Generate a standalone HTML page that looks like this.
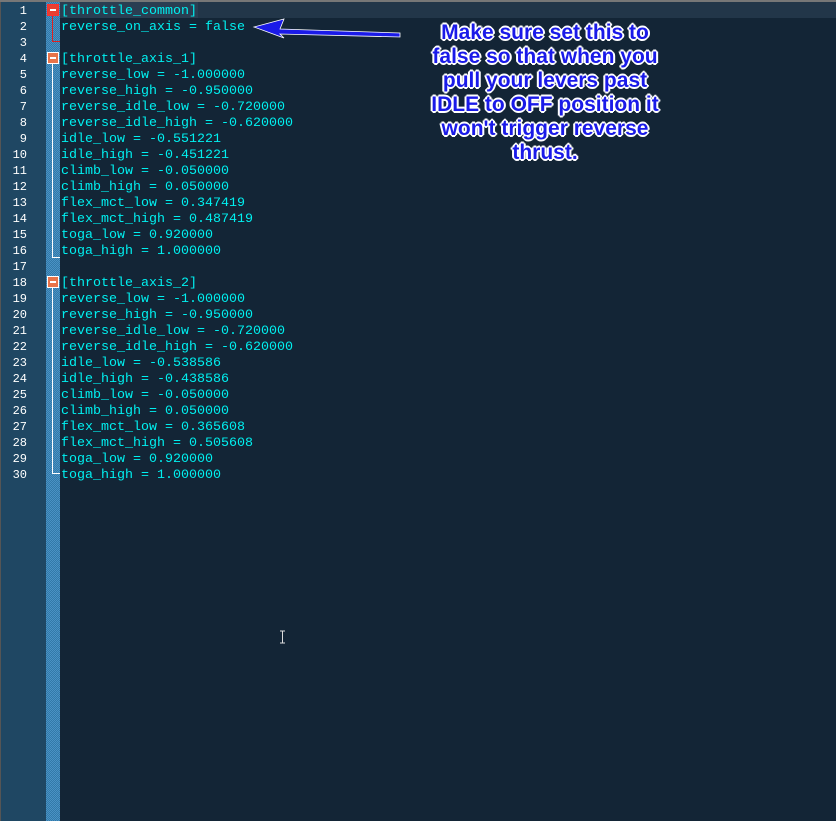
<!DOCTYPE html>
<html><head><style>
html,body{margin:0;padding:0}
body{width:836px;height:821px;background:#132536;position:relative;overflow:hidden}
#lb{position:absolute;left:0;top:0;width:1px;height:821px;background:#555}
#tb{position:absolute;left:0;top:0;width:836px;height:2px;background:#777}
#gut{position:absolute;left:1px;top:0;width:45px;height:821px;background:#1f4763}
#fold{position:absolute;left:46px;top:0;width:14px;height:821px;background-color:#3d86b8;background-image:repeating-conic-gradient(#3279a8 0 25%,#4a92c4 0 50%);background-size:2px 2px}
#cur{position:absolute;left:60px;top:2px;width:776px;height:16px;background:#223649}
.ln{position:absolute;left:1px;width:26px;text-align:right;color:#fff;font:12px "Liberation Mono",monospace;line-height:16px;margin-top:1px}
.code{position:absolute;left:61px;top:4px;color:#00f0f0;font:13.33px "Liberation Mono",monospace;line-height:16px;white-space:pre;margin:0}
.box{position:absolute;left:47px;width:10px;height:10px;border:1px solid #fff;background:#e8744a}
.box:after{content:"";position:absolute;left:2px;top:4px;width:6px;height:2px;background:#fff}
.vl{position:absolute;left:52px;width:1px;background:#fff}
.note{position:absolute;left:385px;top:21px;width:320px;text-align:center;font:bold 21px "Liberation Sans",sans-serif;line-height:24px;color:#1a1ae8;white-space:nowrap;text-shadow:1px 1px 0 #fff,-1px -1px 0 #fff,1px -1px 0 #fff,-1px 1px 0 #fff,2px 0 0 #fff,-2px 0 0 #fff,0 2px 0 #fff,0 -2px 0 #fff}
</style></head><body>
<div id="gut"></div><div id="fold"></div><div id="cur"></div>
<div style="position:absolute;left:60px;top:2px;width:138px;height:16px;background:#2a3e52"></div>
<div id="lb"></div><div id="tb"></div>
<div class="ln" style="top:2px">1</div><div class="ln" style="top:18px">2</div><div class="ln" style="top:34px">3</div><div class="ln" style="top:50px">4</div><div class="ln" style="top:66px">5</div><div class="ln" style="top:82px">6</div><div class="ln" style="top:98px">7</div><div class="ln" style="top:114px">8</div><div class="ln" style="top:130px">9</div><div class="ln" style="top:146px">10</div><div class="ln" style="top:162px">11</div><div class="ln" style="top:178px">12</div><div class="ln" style="top:194px">13</div><div class="ln" style="top:210px">14</div><div class="ln" style="top:226px">15</div><div class="ln" style="top:242px">16</div><div class="ln" style="top:258px">17</div><div class="ln" style="top:274px">18</div><div class="ln" style="top:290px">19</div><div class="ln" style="top:306px">20</div><div class="ln" style="top:322px">21</div><div class="ln" style="top:338px">22</div><div class="ln" style="top:354px">23</div><div class="ln" style="top:370px">24</div><div class="ln" style="top:386px">25</div><div class="ln" style="top:402px">26</div><div class="ln" style="top:418px">27</div><div class="ln" style="top:434px">28</div><div class="ln" style="top:450px">29</div><div class="ln" style="top:466px">30</div>
<div class="vl" style="top:15px;height:27px;background:#e02020"></div>
<div style="position:absolute;left:52px;top:41px;width:8px;height:1px;background:#e02020"></div>
<div class="vl" style="top:63px;height:195px"></div>
<div style="position:absolute;left:52px;top:257px;width:8px;height:1px;background:#fff"></div>
<div class="vl" style="top:287px;height:187px"></div>
<div style="position:absolute;left:52px;top:473px;width:8px;height:1px;background:#fff"></div>
<div class="box" style="top:4px;background:#e84030;border-color:#ff3030"></div>
<div class="box" style="top:52px"></div>
<div class="box" style="top:276px"></div>
<pre class="code">[throttle_common]
reverse_on_axis = false

[throttle_axis_1]
reverse_low = -1.000000
reverse_high = -0.950000
reverse_idle_low = -0.720000
reverse_idle_high = -0.620000
idle_low = -0.551221
idle_high = -0.451221
climb_low = -0.050000
climb_high = 0.050000
flex_mct_low = 0.347419
flex_mct_high = 0.487419
toga_low = 0.920000
toga_high = 1.000000

[throttle_axis_2]
reverse_low = -1.000000
reverse_high = -0.950000
reverse_idle_low = -0.720000
reverse_idle_high = -0.620000
idle_low = -0.538586
idle_high = -0.438586
climb_low = -0.050000
climb_high = 0.050000
flex_mct_low = 0.365608
flex_mct_high = 0.505608
toga_low = 0.920000
toga_high = 1.000000</pre>
<svg style="position:absolute;left:0;top:0" width="836" height="821">
<polygon points="254,27 284,19 280,29 400,33 400,37 280,34 284,38" fill="#1a1ae8" stroke="#fff" stroke-width="0.8"/>
<path d="M280 631h5M282.5 631v12M280 643h5" stroke="#ddd" stroke-width="1"/>
</svg>
<div class="note">Make sure set this to<br>false so that when you<br>pull your levers past<br>IDLE to OFF position it<br>won't trigger reverse<br>thrust.</div>
</body></html>
